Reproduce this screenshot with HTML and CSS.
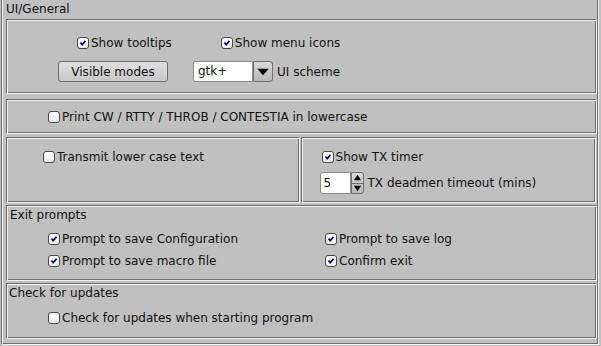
FILE: index.html
```html
<!DOCTYPE html>
<html lang="en">
<head>
  <meta charset="UTF-8" />
  <title>UI/General</title>
  <link rel="stylesheet" href="styles.css">
</head>
<body>
  <div class="panel">
    <div class="panel-title">UI/General</div>

    <div class="box box-main">
      <div class="row row-checks">
        <label class="check on"><span class="tick"><svg viewBox="0 0 12 12"><polyline points="3,5.5 5,8 9,3.5"/></svg></span>Show tooltips</label>
        <label class="check on menu-icons"><span class="tick"><svg viewBox="0 0 12 12"><polyline points="3,5.5 5,8 9,3.5"/></svg></span>Show menu icons</label>
      </div>
      <div class="row row-controls">
        <button class="btn">Visible modes</button>
        <div class="choice">
          <span class="choice-value">gtk+</span>
          <span class="choice-arrow"><svg viewBox="0 0 18 20"><polygon points="3,7 15,7 9,14"/></svg></span>
        </div>
        <span class="side-label">UI scheme</span>
      </div>
    </div>

    <div class="box box-lower">
      <label class="check"><span class="tick"></span>Print CW / RTTY / THROB / CONTESTIA in lowercase</label>
    </div>

    <div class="split">
      <div class="box box-left">
        <label class="check"><span class="tick"></span>Transmit lower case text</label>
      </div>
      <div class="box box-right">
        <label class="check on"><span class="tick"><svg viewBox="0 0 12 12"><polyline points="3,5.5 5,8 9,3.5"/></svg></span>Show TX timer</label>
        <div class="row spin-row">
          <div class="spinner">
            <span class="spin-value">5</span>
            <span class="spin-btns">
              <span class="spin-up"><svg viewBox="0 0 12 10"><polygon points="2,8 10,8 6,2"/></svg></span>
              <span class="spin-down"><svg viewBox="0 0 12 10"><polygon points="2,2 10,2 6,8"/></svg></span>
            </span>
          </div>
          <span class="side-label">TX deadmen timeout (mins)</span>
        </div>
      </div>
    </div>

    <div class="box box-exit">
      <div class="box-title">Exit prompts</div>
      <div class="check-grid">
        <label class="check on"><span class="tick"><svg viewBox="0 0 12 12"><polyline points="3,5.5 5,8 9,3.5"/></svg></span>Prompt to save Configuration</label>
        <label class="check on"><span class="tick"><svg viewBox="0 0 12 12"><polyline points="3,5.5 5,8 9,3.5"/></svg></span>Prompt to save log</label>
        <label class="check on"><span class="tick"><svg viewBox="0 0 12 12"><polyline points="3,5.5 5,8 9,3.5"/></svg></span>Prompt to save macro file</label>
        <label class="check on"><span class="tick"><svg viewBox="0 0 12 12"><polyline points="3,5.5 5,8 9,3.5"/></svg></span>Confirm exit</label>
      </div>
    </div>

    <div class="box box-updates">
      <div class="box-title">Check for updates</div>
      <label class="check"><span class="tick"></span>Check for updates when starting program</label>
    </div>
  </div>
</body>
</html>
```

FILE: styles.css
```css
* {
  margin: 0;
  padding: 0;
  box-sizing: border-box;
}
body {
  font-family: 'DejaVu Sans', sans-serif;
  font-size: 12px;
  color: #111;
  background: #c0c0c0;
  width: 601px;
  height: 346px;
  overflow: hidden;
}
.panel {
  margin-left: 1px;
  width: 598px;
  height: 345px;
  border: 1px solid;
  border-top: none;
  border-color: #6e6e6e #f4f4f4 #f4f4f4 #6e6e6e;
  box-shadow: inset 1px 0 0 #f4f4f4, inset -1px -1px 0 #6e6e6e;
  padding: 0 2px 0 3px;
}
.panel-title {
  height: 19px;
  line-height: 18px;
  padding-left: 1px;
}
.box {
  border: 1px solid;
  border-color: #6e6e6e #f4f4f4 #f4f4f4 #6e6e6e;
  box-shadow: inset 1px 1px 0 #f4f4f4, inset -1px -1px 0 #6e6e6e;
  width: 591px;
  margin-left: 1px;
}
.row {
  display: flex;
  align-items: center;
}
.check {
  display: flex;
  align-items: center;
  height: 16px;
  white-space: nowrap;
}
.tick {
  width: 12px;
  height: 12px;
  margin-right: 2px;
  background: linear-gradient(#fff, #ececec);
  border: 1px solid #4a4a4a;
  border-radius: 3px;
  display: flex;
}
.tick svg {
  width: 10px;
  height: 10px;
  fill: none;
  stroke: #00007a;
  stroke-width: 2;
}

/* top box */
.box-main {
  height: 75px;
  padding: 15px 0 0 70px;
}
.row-checks {
  height: 16px;
}
.menu-icons {
  margin-left: 49px;
}
.row-controls {
  margin: 10px 0 0 -19px;
  height: 21px;
}
.btn {
  font: inherit;
  width: 110px;
  height: 21px;
  border: 1px solid #6e6e6e;
  border-radius: 3px;
  background: linear-gradient(#dedede, #c8c8c8);
  color: #111;
}
.choice {
  display: flex;
  margin-left: 25px;
  height: 21px;
}
.choice-value {
  width: 60px;
  background: #fff;
  border: 1px solid #8a8a8a;
  border-radius: 2px 0 0 2px;
  padding-left: 4px;
  line-height: 19px;
}
.choice-arrow {
  width: 20px;
  border: 1px solid #6e6e6e;
  border-radius: 0 3px 3px 0;
  background: linear-gradient(#d8d8d8, #b8b8b8);
  display: flex;
  align-items: center;
  justify-content: center;
}
.choice-arrow svg {
  width: 18px;
  height: 19px;
  fill: #000;
}
.side-label {
  margin-left: 4px;
}

/* lowercase box */
.box-lower {
  margin-top: 5px;
  height: 35px;
  padding: 9px 0 0 41px;
}

/* split boxes */
.split {
  display: flex;
  margin-top: 3px;
  margin-left: 1px;
  gap: 1px;
}
.split .box {
  margin-left: 0;
  height: 66px;
}
.box-left {
  width: 294px !important;
  padding: 11px 0 0 36px;
}
.box-right {
  width: 296px !important;
  padding: 11px 0 0 20px;
}
.spin-row {
  margin: 7px 0 0 -2px;
  height: 22px;
}
.spinner {
  display: flex;
  height: 22px;
}
.spin-value {
  width: 31px;
  background: #fff;
  border: 1px solid #8a8a8a;
  border-radius: 3px 0 0 3px;
  padding-left: 3px;
  line-height: 20px;
}
.spin-btns {
  width: 13px;
  display: flex;
  flex-direction: column;
  border: 1px solid #6e6e6e;
  border-radius: 0 3px 3px 0;
  background: linear-gradient(#d8d8d8, #b8b8b8);
}
.spin-btns span {
  flex: 1;
  display: flex;
  align-items: center;
  justify-content: center;
}
.spin-up {
  border-bottom: 1px solid #6e6e6e;
}
.spin-btns svg {
  width: 11px;
  height: 9px;
  fill: #000;
}

/* exit prompts */
.box-exit {
  margin-top: 2px;
  height: 76px;
  padding: 1px 0 0 3px;
}
.box-title {
  height: 16px;
  line-height: 16px;
}
.check-grid {
  display: grid;
  grid-template-columns: 277px auto;
  row-gap: 6px;
  margin: 8px 0 0 38px;
}

/* updates */
.box-updates {
  margin-top: 2px;
  height: 56px;
  padding: 1px 0 0 2px;
}
.box-updates .check {
  margin: 9px 0 0 39px;
}
```
